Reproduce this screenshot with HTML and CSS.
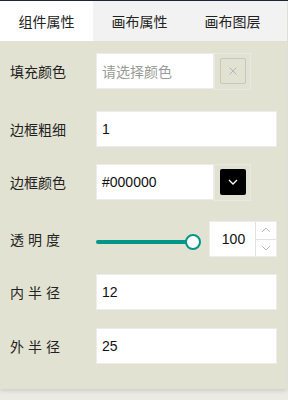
FILE: index.html
```html
<!DOCTYPE html>
<html>
<head>
<meta charset="utf-8">
<link rel="stylesheet" href="styles.css">
</head>
<body>
<div class="topline"></div>
<div class="panel">
  <div class="tabs">
    <div class="tab active">组件属性</div>
    <div class="tab">画布属性</div>
    <div class="tab">画布图层</div>
  </div>
  <div class="content">
    <div class="row r1">
      <div class="lbl">填充颜色</div>
      <div class="field short placeholder">请选择颜色</div>
      <div class="sidebox">
        <div class="clearbtn">
          <svg width="8" height="8" viewBox="0 0 8 8"><path d="M0.5 0.5L7.5 7.5M7.5 0.5L0.5 7.5" stroke="#b4b8c0" stroke-width="1" fill="none"/></svg>
        </div>
      </div>
    </div>
    <div class="row r2">
      <div class="lbl">边框粗细</div>
      <div class="field full">1</div>
    </div>
    <div class="row r3">
      <div class="lbl">边框颜色</div>
      <div class="field short">#000000</div>
      <div class="sidebox">
        <div class="swatch">
          <svg width="10" height="6" viewBox="0 0 10 6"><path d="M1 1L5 5L9 1" stroke="#ffffff" stroke-width="1.3" fill="none"/></svg>
        </div>
      </div>
    </div>
    <div class="row r4">
      <div class="lbl sp">透明度</div>
      <div class="slider">
        <div class="track"></div>
        <div class="thumb"></div>
      </div>
      <div class="num">
        <div class="numval">100</div>
        <div class="spin">
          <div class="spinbtn">
            <svg width="10" height="6" viewBox="0 0 10 6"><path d="M1 5L5 1L9 5" stroke="#b8b8b8" stroke-width="1" fill="none"/></svg>
          </div>
          <div class="spinbtn down">
            <svg width="10" height="6" viewBox="0 0 10 6"><path d="M1 1L5 5L9 1" stroke="#b8b8b8" stroke-width="1" fill="none"/></svg>
          </div>
        </div>
      </div>
    </div>
    <div class="row r5">
      <div class="lbl sp">内半径</div>
      <div class="field full">12</div>
    </div>
    <div class="row r6">
      <div class="lbl sp">外半径</div>
      <div class="field full">25</div>
    </div>
  </div>
</div>
</body>
</html>
```

FILE: styles.css
```css
html, body {
  margin: 0;
  padding: 0;
}
body {
  background: #ebebe3;
  font-family: "Liberation Sans", "Noto Sans CJK SC", sans-serif;
  font-size: 14px;
  color: #222;
  width: 288px;
  height: 400px;
  overflow: hidden;
}
.topline {
  height: 1px;
  background: #1e2637;
}
.panel {
  width: 287px;
  background: #e2e2d2;
  box-shadow: 0 2px 4px rgba(0, 0, 0, 0.12);
}
.tabs {
  display: flex;
  height: 40px;
  background: #f2f2f2;
}
.tab {
  width: 93px;
  display: flex;
  align-items: center;
  justify-content: center;
  font-family: "Noto Sans CJK SC", sans-serif;
  font-size: 14px;
  color: #222;
}
.tab.active {
  background: #ffffff;
}
.content {
  padding: 12px 0 25px 0;
}
.row {
  display: flex;
  align-items: center;
  height: 36px;
}
.r2 { margin-top: 22px; }
.r3 { margin-top: 17px; }
.r4 { margin-top: 21px; }
.r5 { margin-top: 17px; }
.r6 { margin-top: 18px; }
.lbl {
  width: 86px;
  padding-left: 10px;
  font-family: "Noto Sans CJK SC", sans-serif;
  font-size: 14px;
  color: #222;
  line-height: 20px;
}
.lbl.sp {
  letter-spacing: 4px;
}
.field {
  box-sizing: border-box;
  height: 36px;
  background: #ffffff;
  border: 1px solid #ececec;
  padding-left: 5px;
  display: flex;
  align-items: center;
  font-size: 14px;
  color: #111;
}
.field.full { width: 181px; }
.field.short { width: 118px; }
.field.placeholder {
  color: #9a9a9a;
  font-family: "Noto Sans CJK SC", sans-serif;
}
.sidebox {
  box-sizing: border-box;
  width: 37px;
  height: 37px;
  border: 1px solid #e9e9e1;
  display: flex;
  align-items: center;
  justify-content: center;
}
.clearbtn {
  box-sizing: border-box;
  width: 26px;
  height: 26px;
  border: 1px solid #c8c8b8;
  border-radius: 2px;
  display: flex;
  align-items: center;
  justify-content: center;
}
.swatch {
  width: 26px;
  height: 26px;
  background: #000000;
  border-radius: 2px;
  display: flex;
  align-items: center;
  justify-content: center;
}
.slider {
  position: relative;
  width: 105px;
  height: 36px;
  margin-right: 8px;
  margin-top: 10px;
}
.track {
  position: absolute;
  left: 0;
  top: 14px;
  width: 97px;
  height: 4px;
  border-radius: 2px;
  background: #009688;
}
.thumb {
  position: absolute;
  left: 89px;
  top: 8px;
  box-sizing: border-box;
  width: 16px;
  height: 16px;
  border-radius: 50%;
  border: 2px solid #009688;
  background: #ffffff;
}
.num {
  box-sizing: border-box;
  width: 68px;
  height: 36px;
  background: #ffffff;
  border: 1px solid #ececec;
  display: flex;
}
.numval {
  flex: 1;
  display: flex;
  align-items: center;
  justify-content: center;
  font-size: 14px;
  color: #111;
  padding-left: 2px;
}
.spin {
  width: 20px;
  border-left: 1px solid #e2e2e2;
  display: flex;
  flex-direction: column;
}
.spinbtn {
  flex: 1;
  display: flex;
  align-items: center;
  justify-content: center;
}
.spinbtn.down {
  border-top: 1px solid #e2e2e2;
}
```
